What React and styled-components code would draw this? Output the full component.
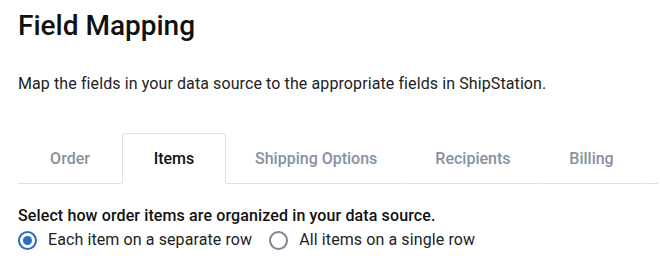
import React, { useState } from "react";
import styled, { createGlobalStyle } from "styled-components";

const GlobalStyle = createGlobalStyle`
  body {
    margin: 0;
    background: #fff;
    font-family: Roboto, "Liberation Sans", sans-serif;
    color: #1a1a1a;
  }
`;

const Page = styled.div`
  padding: 8px 2px 0 18px;
`;

const Title = styled.h1`
  margin: 0;
  font-size: 28px;
  font-weight: 500;
  line-height: 36px;
  color: #111;
`;

const Lead = styled.p`
  margin: 30px 0 0;
  font-size: 16px;
  line-height: 20px;
  letter-spacing: 0.1px;
  color: #222;
`;

const TabBar = styled.div`
  display: flex;
  margin-top: 39px;
`;

const Tab = styled.button`
  min-width: 104px;
  height: 51px;
  padding: 0 28px;
  background: #fff;
  font-family: inherit;
  font-size: 16px;
  font-weight: 500;
  color: ${(p) => (p.$active ? "#111" : "#8691a3")};
  border: 1px solid ${(p) => (p.$active ? "#dde1e7" : "transparent")};
  border-bottom: 1px solid ${(p) => (p.$active ? "#fff" : "#dde1e7")};
  border-radius: 3px 3px 0 0;
  cursor: pointer;
`;

const Filler = styled.div`
  flex: 1;
  border-bottom: 1px solid #dde1e7;
`;

const Question = styled.div`
  margin-top: 22px;
  font-size: 16px;
  font-weight: 500;
  line-height: 20px;
  letter-spacing: 0.12px;
  color: #111;
`;

const Options = styled.div`
  display: flex;
  align-items: center;
  gap: 17px;
  margin-top: 4px;
`;

const Option = styled.label`
  display: flex;
  align-items: center;
  gap: 11px;
  font-size: 16px;
  line-height: 20px;
  letter-spacing: 0.1px;
  color: #222;
  cursor: pointer;
`;

const Dot = styled.span`
  width: 19px;
  height: 19px;
  box-sizing: border-box;
  border-radius: 50%;
  border: 2px solid ${(p) => (p.$on ? "#2b6cc4" : "#7c8593")};
  display: flex;
  align-items: center;
  justify-content: center;
  &::after {
    content: "";
    width: 9px;
    height: 9px;
    border-radius: 50%;
    background: ${(p) => (p.$on ? "#2b6cc4" : "transparent")};
  }
`;

const tabs = ["Order", "Items", "Shipping Options", "Recipients", "Billing"];
const choices = ["Each item on a separate row", "All items on a single row"];

export default function App() {
  const [active, setActive] = useState(1);
  const [choice, setChoice] = useState(0);
  return (
    <Page>
      <GlobalStyle />
      <Title>Field Mapping</Title>
      <Lead>Map the fields in your data source to the appropriate fields in ShipStation.</Lead>
      <TabBar>
        {tabs.map((t, i) => (
          <Tab key={t} $active={i === active} onClick={() => setActive(i)}>
            {t}
          </Tab>
        ))}
        <Filler />
      </TabBar>
      <Question>Select how order items are organized in your data source.</Question>
      <Options>
        {choices.map((c, i) => (
          <Option key={c} onClick={() => setChoice(i)}>
            <Dot $on={i === choice} />
            {c}
          </Option>
        ))}
      </Options>
    </Page>
  );
}
